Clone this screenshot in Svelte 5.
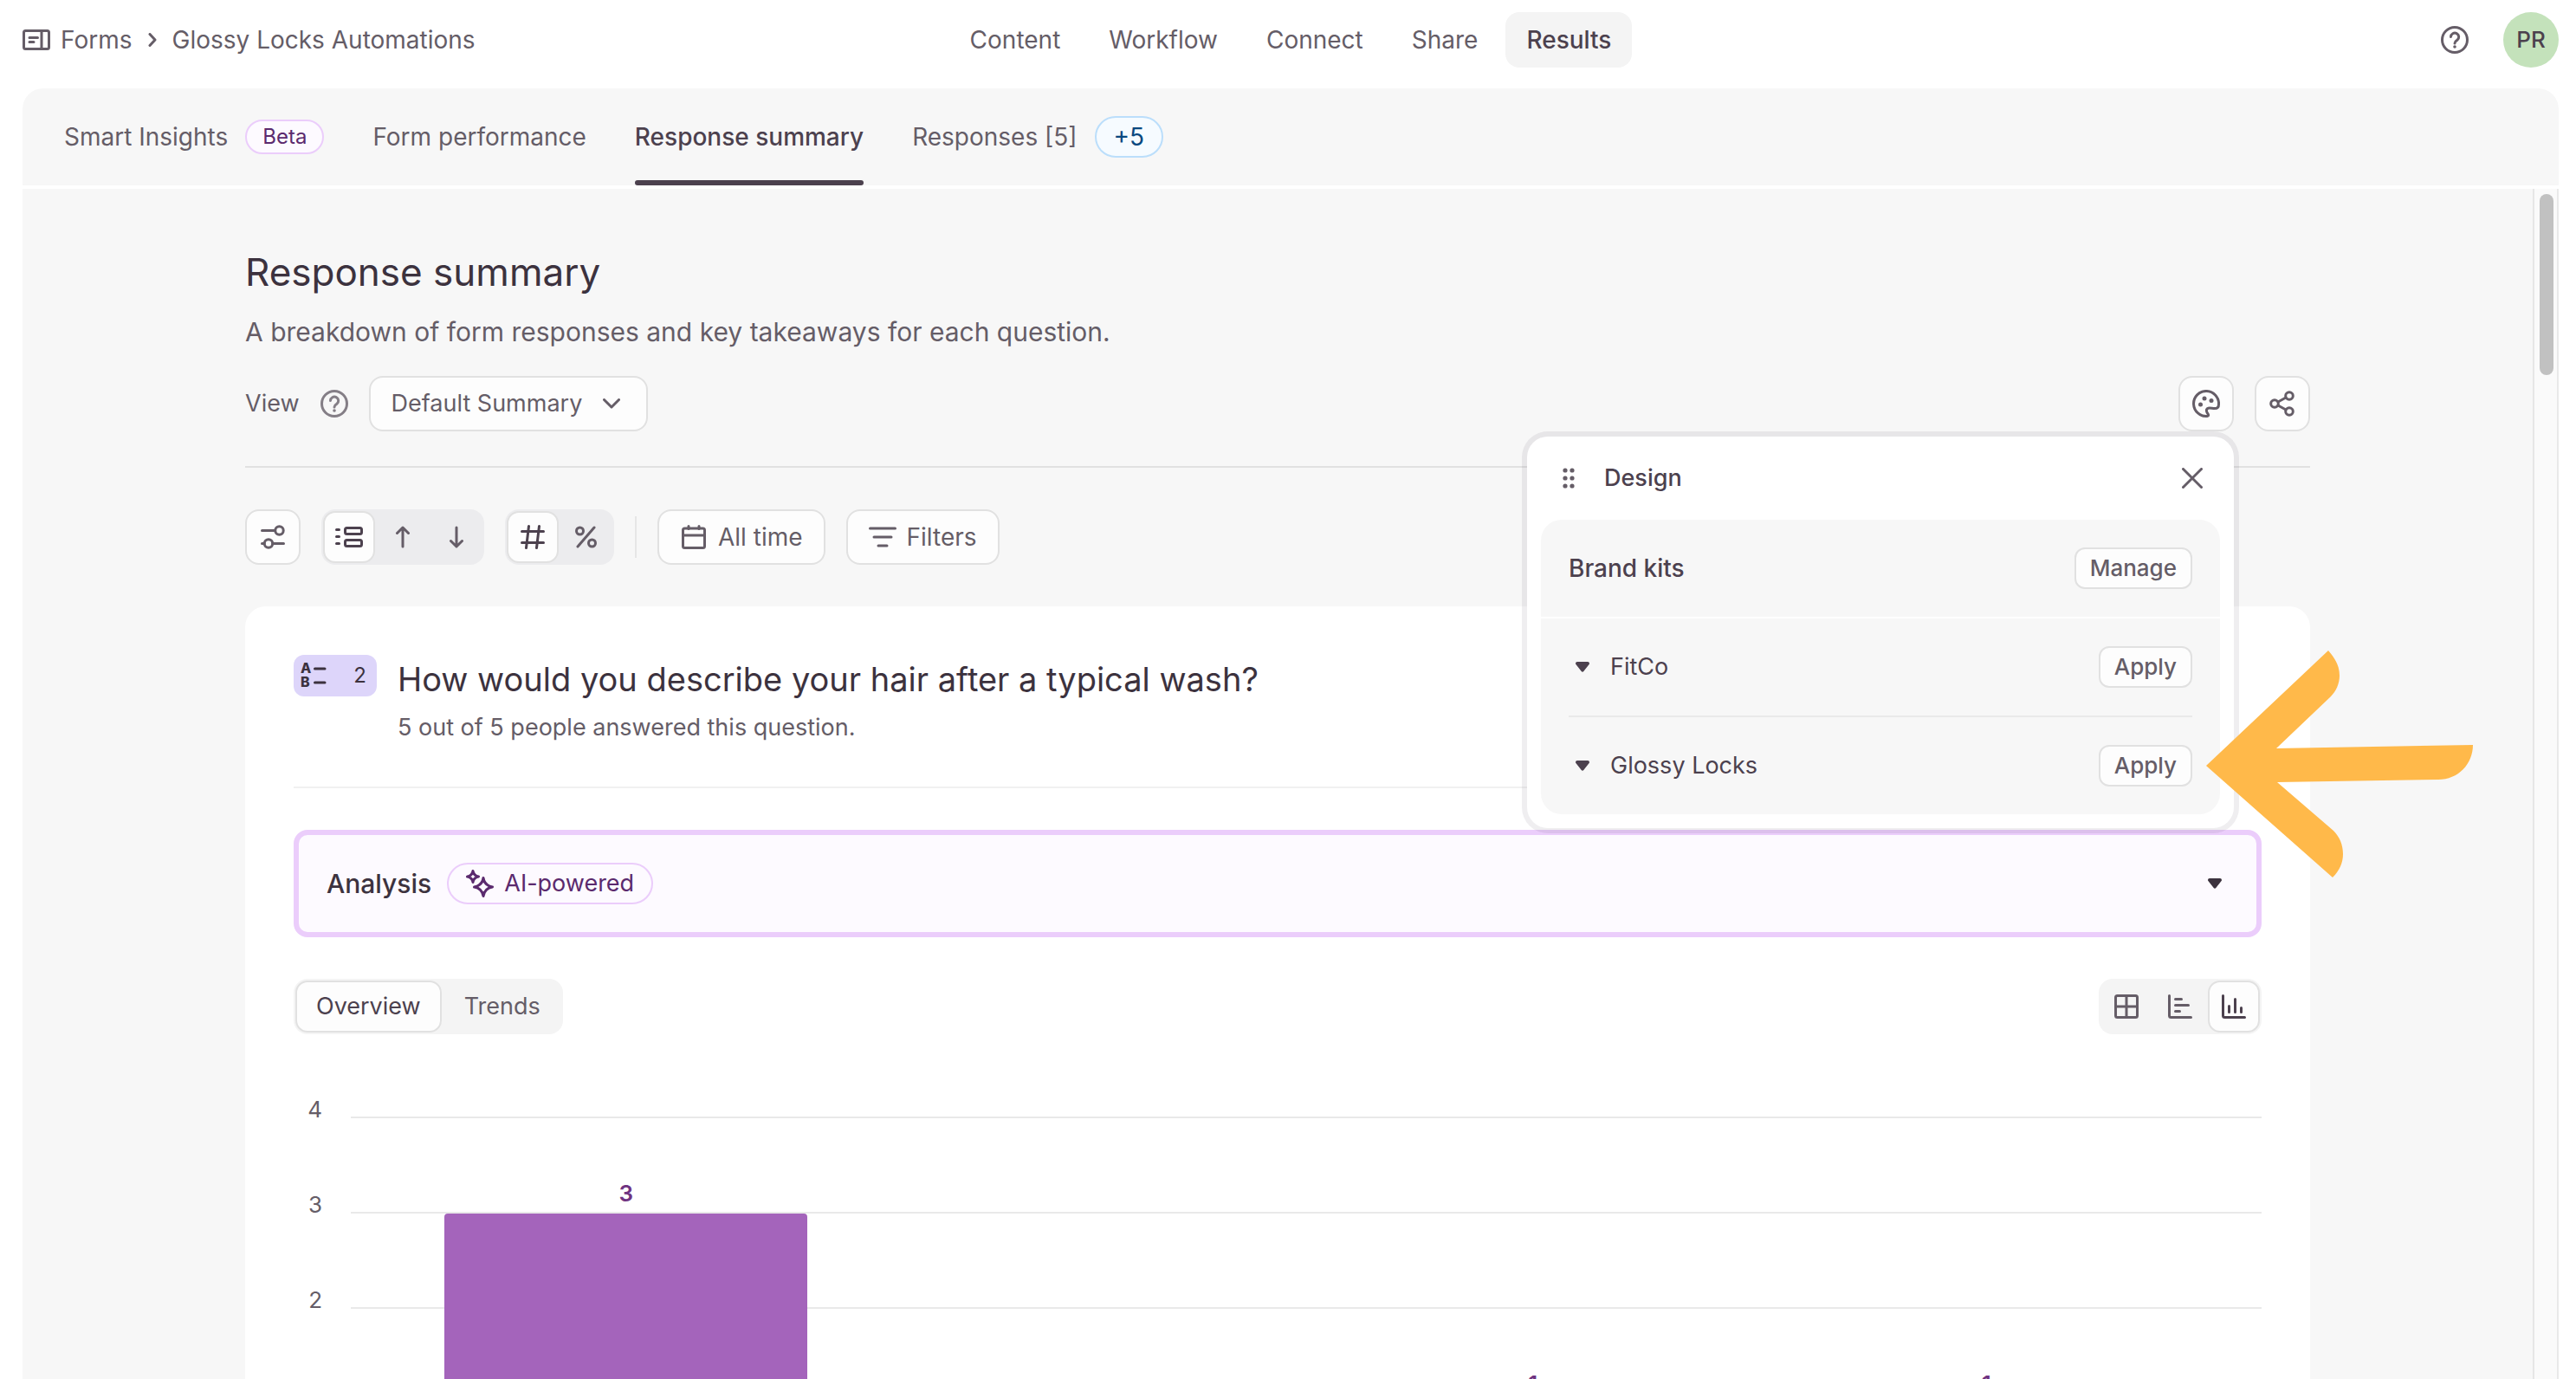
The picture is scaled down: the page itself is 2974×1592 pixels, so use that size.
<script lang="ts">
  const navItems = ['Content', 'Workflow', 'Connect', 'Share', 'Results'];
  let activeNav = $state('Results');

  const tabs = [
    { label: 'Smart Insights', badge: 'Beta', tone: 'purple' },
    { label: 'Form performance' },
    { label: 'Response summary' },
    { label: 'Responses [5]', badge: '+5', tone: 'blue' }
  ];
  let activeTab = $state('Response summary');

  let view = $state('Default Summary');
  let order = $state('list');
  let unit = $state('number');
  let mode = $state('Overview');
  let chartType = $state('column');
  let showDesign = $state(true);

  const brandKits = ['FitCo', 'Glossy Locks'];

  const ticks = [4, 3, 2, 1, 0];
  const answers = [3, 0, 1, 1];
</script>

{#snippet help()}
  <svg class="icon" width="32" height="32" viewBox="0 0 32 32">
    <circle cx="16" cy="16" r="14.5" />
    <path d="M11.5 12.500a4.600 4.600 0 1 1 7.400 3.800c-1.900 1.300-2.900 1.800-2.900 3.700" />
    <circle class="dot" cx="16" cy="24" r="1.8" />
  </svg>
{/snippet}

{#snippet caret()}
  <svg width="16" height="12" viewBox="0 0 16 12">
    <path fill="currentColor" d="M2 0h12c1.800 0 2.600 2 1.400 3.300L9.300 11c-.7.9-1.900.9-2.600 0L.6 3.300C-.6 2 .2 0 2 0z" />
  </svg>
{/snippet}

<div class="page">
  <header class="topbar">
    <nav class="crumbs" aria-label="Breadcrumb">
      <a href="#forms">
        <svg class="icon" width="32" height="24" viewBox="0 0 32 24">
          <rect x="1.5" y="1.5" width="29" height="21" rx="2" />
          <path d="M22 2v20M8 9.500h9.500M8 14.500h5" />
        </svg>
        Forms
      </a>
      <svg class="icon" width="10" height="16" viewBox="0 0 10 16"><path d="M2 1.500 8 8l-6 6.500" /></svg>
      <a href="#form">Glossy Locks Automations</a>
    </nav>
    <nav class="main-nav" aria-label="Main">
      {#each navItems as item}
        <a href="#{item.toLowerCase()}" class:active={activeNav === item} onclick={() => (activeNav = item)}>{item}</a>
      {/each}
    </nav>
    <div class="account">
      <button class="plain" aria-label="Help">{@render help()}</button>
      <button class="avatar">PR</button>
    </div>
  </header>

  <div class="panel">
    <div class="tabs" role="tablist">
      {#each tabs as tab}
        <button class="tab" role="tab" aria-selected={activeTab === tab.label} onclick={() => (activeTab = tab.label)}>
          <span class="tab-label">{tab.label}</span>
          {#if tab.badge}<span class="pill {tab.tone}">{tab.badge}</span>{/if}
        </button>
      {/each}
    </div>

    <div class="body">
      <main>
        <h1>Response summary</h1>
        <p class="intro">A breakdown of form responses and key takeaways for each question.</p>

        <div class="view-row">
          <label for="view">View</label>
          <button class="plain faded" aria-label="About views">{@render help()}</button>
          <div class="select">
            <select id="view" bind:value={view}>
              <option>Default Summary</option>
            </select>
            <svg class="icon" width="20" height="12" viewBox="0 0 20 12"><path d="m1.500 1.500 8.500 8.500 8.500-8.500" /></svg>
          </div>
          <div class="view-actions">
            <button class="box square" aria-label="Design" onclick={() => (showDesign = !showDesign)}>
              <svg class="icon" width="32" height="32" viewBox="0 0 32 32">
                <path d="M17.500 30.400A14.500 14.500 0 1 1 30.500 17c0 3-1.800 4.600-4.500 4.600-3 0-5-.8-7.500-.4-1.900.4-2.400 2-1.900 3.900.5 1.800 2.400 3.300 2 4.400-.2.600-.6.800-1.100.9z" />
                <circle class="dot" cx="14" cy="10" r="2.5" />
                <circle class="dot" cx="22" cy="12.5" r="2.5" />
                <circle class="dot" cx="9.5" cy="17" r="2.5" />
              </svg>
            </button>
            <button class="box square" aria-label="Share">
              <svg class="icon" width="32" height="32" viewBox="0 0 32 32">
                <circle cx="7" cy="16" r="4.3" />
                <circle cx="24" cy="7" r="4.3" />
                <circle cx="24" cy="25" r="4.3" />
                <path d="m11 14 9-5M11 18l9 5" />
              </svg>
            </button>

            {#if showDesign}
              <section class="design" aria-label="Design">
                <div class="design-head">
                  <svg width="14" height="24" viewBox="0 0 14 24" fill="currentColor">
                    {#each [3, 12, 21] as y}
                      <circle cx="3" cy={y} r="2.6" />
                      <circle cx="11" cy={y} r="2.6" />
                    {/each}
                  </svg>
                  <h2>Design</h2>
                  <button class="plain" aria-label="Close" onclick={() => (showDesign = false)}>
                    <svg class="icon" width="24" height="24" viewBox="0 0 24 24"><path d="m1.500 1.500 21 21M22.500 1.500l-21 21" /></svg>
                  </button>
                </div>
                <div class="kits">
                  <div class="kit-row">
                    <h3>Brand kits</h3>
                    <button class="box small">Manage</button>
                  </div>
                  <ul>
                    {#each brandKits as kit}
                      <li class="kit-row">
                        <button class="plain kit">{@render caret()}{kit}</button>
                        <button class="box small">Apply</button>
                      </li>
                    {/each}
                  </ul>
                </div>
                <svg class="arrow" width="310" height="264" viewBox="0 0 310 264">
                  <path fill="#ffb94a" d="M0 134 141 1c8 9 13 18 13 29 0 9-4 18-10 24L81 114l227-4c0 22-17 40-40 40L82 153l65 56c7 7 11 16 11 27 0 10-4 19-12 27z" />
                </svg>
              </section>
            {/if}
          </div>
        </div>

        <div class="toolbar">
          <button class="box square" aria-label="Settings">
            <svg class="icon" width="32" height="32" viewBox="0 0 32 32">
              <circle cx="23.5" cy="8.5" r="4.7" />
              <path d="M3.500 8.500h15" />
              <circle cx="11" cy="23.5" r="4.7" />
              <path d="M3.500 23.500h2.500M16 23.500h12.500" />
            </svg>
          </button>
          <div class="segment deep">
            <button aria-label="Question order" aria-pressed={order === 'list'} onclick={() => (order = 'list')}>
              <svg class="icon" width="32" height="24" viewBox="0 0 32 24">
                <rect x="11.5" y="1.5" width="19" height="7" rx="2" />
                <rect x="11.5" y="15.5" width="19" height="7" rx="2" />
                <path d="M1.500 3.500h3M1.500 11.500h3M1.500 19.500h3" />
              </svg>
            </button>
            <button aria-label="Ascending" aria-pressed={order === 'asc'} onclick={() => (order = 'asc')}>
              <svg class="icon" width="20" height="26" viewBox="0 0 20 26"><path d="M10 24V2M3.500 8.500 10 2l6.500 6.500" /></svg>
            </button>
            <button aria-label="Descending" aria-pressed={order === 'desc'} onclick={() => (order = 'desc')}>
              <svg class="icon" width="20" height="26" viewBox="0 0 20 26"><path d="M10 2v22M3.500 17.500 10 24l6.500-6.500" /></svg>
            </button>
          </div>
          <div class="segment deep">
            <button aria-label="Show numbers" aria-pressed={unit === 'number'} onclick={() => (unit = 'number')}>
              <svg class="icon" width="28" height="28" viewBox="0 0 28 28"><path d="M9.500 1.500 6.500 26.500M21.500 1.500l-3 25M1.500 7.500h25M1.500 20.500h25" /></svg>
            </button>
            <button aria-label="Show percentages" aria-pressed={unit === 'percent'} onclick={() => (unit = 'percent')}>
              <svg class="icon" width="28" height="26" viewBox="0 0 28 26">
                <path d="M23 2 4 24" /><circle cx="6.5" cy="6" r="4" /><circle cx="20.5" cy="20" r="4" />
              </svg>
            </button>
          </div>
          <span class="rule"></span>
          <button class="box">
            <svg class="icon" width="32" height="28" viewBox="-2 0 32 28"><rect x="1.5" y="4" width="25" height="22.500" rx="2" /><path d="M1.500 12h25M8 1.500v3M20 1.500v3" /></svg>
            All time
          </button>
          <button class="box">
            <svg class="icon" width="32" height="24" viewBox="0 0 32 24"><path d="M1.500 2h29M6 12h20M11 22h10" /></svg>
            Filters
          </button>
        </div>

        <article class="card">
          <div class="question">
            <span class="q-badge">
              <svg class="choice" width="30" height="30" viewBox="0 0 30 30">
                <text x="0" y="12">A</text>
                <text x="0" y="28">B</text>
                <path d="M16.500 7H28M16.500 23H28" />
              </svg>
              2
            </span>
            <div>
              <h2>How would you describe your hair after a typical wash?</h2>
              <p>5 out of 5 people answered this question.</p>
            </div>
          </div>

          <button class="analysis">
            <span class="analysis-title">Analysis</span>
            <span class="pill purple ai">
              <svg width="32" height="32" viewBox="0 0 32 32" fill="none" stroke="currentColor" stroke-width="3" stroke-linejoin="round">
                <path d="M20 9.500q1.500 9 10.500 10.500q-9 1.500-10.500 10.500q-1.500-9-10.500-10.500q9-1.500 10.500-10.500z" />
                <path d="M8 1.500q1 5.500 6.500 6.500q-5.500 1-6.500 6.500q-1-5.500-6.500-6.500q5.500-1 6.500-6.500z" />
              </svg>
              AI-powered
            </span>
            {@render caret()}
          </button>

          <div class="chart-controls">
            <div class="segment">
              {#each ['Overview', 'Trends'] as name}
                <button class="text" aria-pressed={mode === name} onclick={() => (mode = name)}>{name}</button>
              {/each}
            </div>
            <div class="segment">
              <button aria-label="Table" aria-pressed={chartType === 'table'} onclick={() => (chartType = 'table')}>
                <svg class="icon" width="28" height="28" viewBox="0 0 28 28"><rect x="1.5" y="1.5" width="25" height="25" rx="2" /><path d="M14 2v24M2 14h24" /></svg>
              </button>
              <button aria-label="Bar chart" aria-pressed={chartType === 'bar'} onclick={() => (chartType = 'bar')}>
                <svg class="icon" width="28" height="28" viewBox="0 0 28 28"><path d="M1.500 1.500v23a2 2 0 0 0 2 2h23M8.500 5.500h7M8.500 12.500h15M8.500 19.500h5" /></svg>
              </button>
              <button aria-label="Column chart" aria-pressed={chartType === 'column'} onclick={() => (chartType = 'column')}>
                <svg class="icon" width="28" height="28" viewBox="0 0 28 28"><path d="M1.500 1.500v23a2 2 0 0 0 2 2h23M8.500 13.500v7M15.500 5.500v15M22.500 15.500v5" /></svg>
              </button>
            </div>
          </div>

          <div class="chart">
            {#each ticks as tick}
              <div class="tick"><span>{tick}</span></div>
            {/each}
            <div class="bars">
              {#each answers as count}
                <div class="bar-slot">
                  {#if count}
                    <span>{count}</span>
                    <div class="bar" style="height: {count * 110}px"></div>
                  {/if}
                </div>
              {/each}
            </div>
          </div>
        </article>
      </main>
      <div class="scroll-track"><div class="scroll-thumb"></div></div>
    </div>
  </div>
</div>

<style>
  :global(body) { margin: 0; background: #fff; }

  .page {
    height: 100vh; display: flex; flex-direction: column; overflow: hidden;
    font-family: Inter, "Liberation Sans", sans-serif; font-size: 28px; line-height: 40px; color: #655d67;
  }
  .page * { box-sizing: border-box; }

  h1, h2, h3, p, ul { margin: 0; padding: 0; font-weight: 400; }
  ul { list-style: none; }
  a { color: inherit; text-decoration: none; }
  button, select { font: inherit; color: inherit; cursor: pointer; margin: 0; }
  svg { display: block; flex: none; }

  .icon { fill: none; stroke: currentColor; stroke-width: 3; stroke-linecap: round; stroke-linejoin: round; }
  .icon .dot { fill: currentColor; stroke: none; }
  .plain { background: none; border: none; padding: 0; }
  .faded { color: #847e86; }

  .topbar { display: grid; grid-template-columns: 1fr auto 1fr; align-items: center; padding: 14px 20px 24px 26px; flex: none; }
  .crumbs { display: flex; align-items: center; gap: 18px; }
  .crumbs a { display: flex; align-items: center; gap: 12px; }
  .main-nav { display: flex; gap: 8px; }
  .main-nav a { padding: 12px 24px; border-radius: 16px; }
  .main-nav .active { background: #f4f4f4; color: #4c414e; font-weight: 500; }
  .account { display: flex; justify-content: flex-end; align-items: center; gap: 40px; }
  .avatar { width: 64px; height: 64px; padding: 0; border: none; border-radius: 50%; background: #c4e2bb; color: #4c414e; font-size: 26px; font-weight: 500; }

  .panel { flex: 1; min-height: 0; margin: 0 20px 0 26px; display: flex; flex-direction: column; background: #f7f7f7; border-radius: 24px 24px 0 0; overflow: hidden; }
  .tabs { display: flex; gap: 56px; padding: 0 48px; height: 116px; border-bottom: 4px solid #fff; flex: none; }
  .tab { display: flex; align-items: center; gap: 20px; padding: 0; border: none; background: none; position: relative; }
  .tab[aria-selected="true"] { color: #4c414e; font-weight: 500; }
  .tab[aria-selected="true"]::after { content: ""; position: absolute; left: 0; right: 0; bottom: 0; height: 6px; border-radius: 3px; background: #4c414e; }

  .pill { display: inline-flex; align-items: center; border: 2px solid; border-radius: 24px; padding: 0 18px; }
  .purple { background: #fdfaff; border-color: #ebcdfb; color: #5b2a6e; font-size: 24px; line-height: 36px; }
  .blue { background: #f6fbff; border-color: #bbdefb; color: #0a487f; line-height: 44px; padding: 0 20px; }
  .purple.ai { font-size: 27px; line-height: 44px; gap: 12px; padding: 0 20px; }

  .body { flex: 1; min-height: 0; display: flex; overflow: hidden; }
  main { flex: 1; padding: 66px 257px 0; min-width: 0; }
  .scroll-track { width: 30px; flex: none; padding: 6px 4px 0 6px; background: #fafafa; border-left: 2px solid #e6e6e6; border-right: 2px solid #e9e9e9; }
  .scroll-thumb { width: 16px; height: 209px; border-radius: 8px; background: #c1c1c1; }

  h1 { font-size: 44px; line-height: 60px; color: #3c323e; }
  .intro { font-size: 30px; line-height: 44px; margin-top: 17px; }

  .view-row { display: flex; align-items: center; margin-top: 29px; padding-bottom: 40px; border-bottom: 2px solid #e1e1e1; gap: 24px; font-size: 27px; }
  .box {
    display: inline-flex; align-items: center; justify-content: center; gap: 12px; height: 64px; padding: 0 24px;
    background: #fdfdfd; border: 2px solid #e1e1e1; border-radius: 16px;
  }
  .box.square { width: 64px; padding: 0; }
  .box.small { height: 48px; padding: 0 16px; border-radius: 12px; font-size: 26px; font-weight: 500; }
  .select { position: relative; }
  .select select { width: 322px; height: 64px; padding: 0 24px; appearance: none; background: #fdfdfd; border: 2px solid #e1e1e1; border-radius: 16px; }
  .select svg { position: absolute; right: 32px; top: 26px; pointer-events: none; }
  .view-actions { display: flex; gap: 24px; margin-left: auto; position: relative; }

  .design { position: absolute; top: 70px; right: 88px; width: 816px; padding: 0 16px 16px; background: #fff; border-radius: 24px; box-shadow: 0 0 0 6px rgba(76, 65, 94, 0.09); color: #4c414e; }
  .design-head { display: flex; align-items: center; height: 96px; padding: 0 20px 0 25px; color: #655d67; }
  .design-head h2 { margin: 0 auto 0 34px; color: #4c414e; font-size: 27px; font-weight: 500; }
  .kits { background: #f7f7f7; border-radius: 24px; }
  .kit-row { display: flex; align-items: center; justify-content: space-between; height: 112px; }
  .kit-row h3 { font-size: 28px; font-weight: 500; }
  .kit-row .small { color: #655d67; }
  .kits > .kit-row { padding: 0 32px; }
  .kits ul { border-top: 2px solid #fff; padding: 0 32px; }
  .kits li + li { border-top: 2px solid #e9e9e9; height: 114px; }
  .kit { display: flex; align-items: center; gap: 24px; padding-left: 8px; }
  .arrow { position: absolute; left: 784px; top: 246px; pointer-events: none; }

  .toolbar { display: flex; align-items: center; gap: 24px; padding: 48px 0; }
  .segment { display: flex; padding: 2px; gap: 2px; background: #f4f4f4; border-radius: 16px; }
  .segment.deep { background: #ececee; }
  .segment button { display: flex; align-items: center; justify-content: center; min-width: 60px; height: 60px; padding: 0; background: none; border: 2px solid transparent; border-radius: 14px; }
  .segment button[aria-pressed="true"] { background: #fdfdfd; border-color: #e1e1e1; color: #4c414e; }
  .segment .text { padding: 0 22px; font-size: 27px; }
  .rule { width: 2px; height: 48px; background: #e6e6e6; }

  .card { background: #fff; border-radius: 24px; padding: 56px 56px 80px; }
  .question { display: flex; gap: 24px; padding-bottom: 48px; border-bottom: 2px solid #f1f1f1; }
  .q-badge { display: flex; align-items: center; justify-content: space-between; width: 96px; height: 48px; padding: 0 12px 0 8px; border-radius: 12px; background: #ddd5fa; color: #3c323e; font-size: 24px; flex: none; }
  .choice { stroke: currentColor; stroke-width: 3; stroke-linecap: round; }
  .choice text { font-size: 16px; font-weight: 800; fill: currentColor; stroke: none; }
  .question h2 { font-size: 38px; line-height: 56px; color: #3c323e; }
  .question p { margin-top: 8px; font-size: 27px; }

  .analysis { display: flex; align-items: center; gap: 18px; width: 100%; height: 124px; margin: 48px 0; padding: 0 40px 0 32px; background: #fdfaff; border: 6px solid #ebcdfb; border-radius: 16px; color: #3c323e; }
  .analysis-title { font-size: 30px; font-weight: 500; }
  .analysis > :global(svg) { margin-left: auto; }

  .chart-controls { display: flex; justify-content: space-between; }
  .chart { position: relative; display: flex; flex-direction: column; gap: 90px; margin-top: 77px; }
  .tick { display: flex; align-items: flex-end; gap: 33px; height: 20px; font-size: 26px; line-height: 20px; }
  .tick span { width: 33px; text-align: right; }
  .tick::after { content: ""; flex: 1; height: 2px; background: #e9e9e9; }
  .bars { position: absolute; inset: 0 0 0 66px; display: grid; grid-template-columns: repeat(4, 1fr); padding: 0 56px; }
  .bar-slot { display: flex; flex-direction: column; align-items: center; justify-content: flex-end; }
  .bar-slot span { font-size: 26px; line-height: 20px; font-weight: 600; color: #6f3381; margin-bottom: 13px; }
  .bar { width: 80%; flex: none; border-radius: 4px 4px 0 0; background: #a464bb; }
</style>
